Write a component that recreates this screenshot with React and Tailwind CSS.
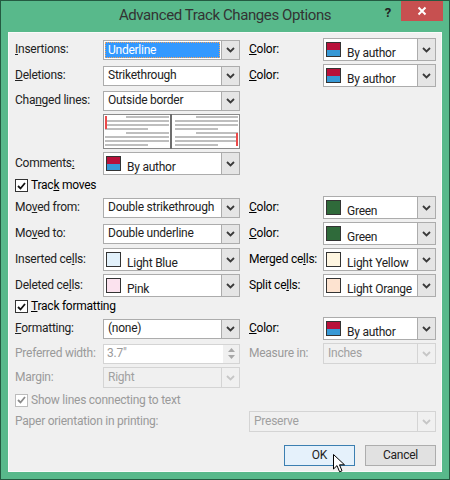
import React from 'react';

const FONT = { fontFamily: 'Roboto, Lato, "Open Sans", sans-serif' };

const Chevron = ({ disabled }) => (
  <svg width="9" height="6" viewBox="0 0 9 6">
    <path d="M1 1 L4.5 4.5 L8 1" fill="none" stroke={disabled ? '#c6c6c6' : '#3a3a3a'} strokeWidth="1.8" />
  </svg>
);

const ArrowBox = ({ disabled }) => (
  <div className={`w-[18px] h-full flex items-center justify-center border-l ${disabled ? 'border-[#d4d4d4] bg-[#f0f0f0]' : 'border-[#acacac] bg-[#e5e5e5]'}`}>
    <Chevron disabled={disabled} />
  </div>
);

const TextDrop = ({ value, w = 'w-[137px]', selected, disabled, h = 'h-[20px]' }) => (
  <div className={`${w} ${h} flex border ${disabled ? 'border-[#d4d4d4] bg-[#f0f0f0]' : 'border-[#acacac] bg-white'}`}>
    <div className="flex-1 flex items-center px-[1px] overflow-hidden whitespace-nowrap">
      {selected ? (
        <div className="w-full h-[16px] bg-[#3399ff] border border-dotted border-[#f5a35b] text-white pl-[2px] leading-[14px]">
          {value}
        </div>
      ) : (
        <span className={`pl-[3px] ${disabled ? 'text-[#a0a0a0]' : 'text-[#222]'}`}>{value}</span>
      )}
    </div>
    <ArrowBox disabled={disabled} />
  </div>
);

const AuthorSwatch = () => (
  <div className="w-[15px] h-[15px] border border-[#333] flex flex-col">
    <div className="flex-1 bg-[#b8113a]" />
    <div className="flex-1 bg-[#3799d6]" />
  </div>
);

const ColorDrop = ({ color, label, w = 'w-[113px]' }) => (
  <div className={`${w} h-[23px] flex border border-[#acacac] bg-white`}>
    <div className="flex-1 flex pl-[2px] pt-[3px] whitespace-nowrap overflow-hidden">
      {color === 'author' ? (
        <AuthorSwatch />
      ) : (
        <div className="w-[15px] h-[15px] border border-[#333]" style={{ background: color }} />
      )}
      <span className="ml-[6px] mt-[3px] text-[#222] leading-[16px]">{label}</span>
    </div>
    <ArrowBox />
  </div>
);

const Check = ({ disabled }) => (
  <div className={`w-[13px] h-[13px] border ${disabled ? 'border-[#bcbcbc]' : 'border-[#333]'} bg-white flex items-center justify-center`}>
    <svg width="9" height="8" viewBox="0 0 9 8">
      <path d="M1 4 L3.5 6.5 L8 1" fill="none" stroke={disabled ? '#8a8a8a' : '#111'} strokeWidth="1.8" />
    </svg>
  </div>
);

const Label = ({ children, disabled, w = 'w-[88px]' }) => (
  <div className={`${w} shrink-0 ${disabled ? 'text-[#9a9a9a]' : 'text-[#222]'}`}>{children}</div>
);

const Preview = () => {
  const lines = (x0, x1) =>
    [3, 7, 11, 15, 19, 23, 27, 31].map((y, i) => {
      const k = i % 4;
      let a = x0;
      let b = x1;
      if (k === 0) a = x0 + 21;
      if (k === 3) b = x0 + 43;
      return <line key={`${x0}-${i}`} x1={a} y1={y} x2={b} y2={y} stroke="#a9a9a9" strokeWidth="1.6" />;
    });
  return (
    <svg width="137" height="35" viewBox="0 0 137 35">
      <rect x="0.5" y="0.5" width="136" height="34" fill="#fff" stroke="#8a8a8a" />
      {lines(2, 66)}
      {lines(72, 135)}
      <rect x="67" y="0" width="2" height="35" fill="#6e6e6e" />
      <rect x="2" y="2" width="2" height="13" fill="#ec4a4a" />
      <rect x="133" y="19" width="2" height="13" fill="#ec4a4a" />
    </svg>
  );
};

export default function App() {
  return (
    <div className="w-[450px] h-[480px] bg-[#58b98b] border border-[#245a41] text-[12px] leading-[15px] tracking-[-0.25px]" style={FONT}>
      <div className="h-[31px] grid grid-cols-[1fr_auto_1fr]">
        <div />
        <div className="pt-[5px] text-[15px] text-[#333] leading-[18px] tracking-[-0.4px]">Advanced Track Changes Options</div>
        <div className="flex justify-end items-start pr-[6px]">
          <span className="mt-[4px] mr-[10px] text-[13px] font-bold text-[#222]">?</span>
          <div className="w-[42px] h-[20px] bg-[#c75050] flex items-center justify-center">
            <svg width="10" height="10" viewBox="0 0 10 10">
              <path d="M1.5 1.5 L8.5 8.5 M8.5 1.5 L1.5 8.5" stroke="#fff" strokeWidth="2" />
            </svg>
          </div>
        </div>
      </div>

      <div className="ml-[7px] w-[434px] h-[440px] bg-[#f0f0f0] border border-[#fafafa] pl-[6px] pt-[5px] flex flex-col">
        <div className="flex items-center h-[23px]">
          <Label><u>I</u>nsertions:</Label>
          <TextDrop value="Underline" selected />
          <div className="ml-[9px] w-[74px]"><u>C</u>olor:</div>
          <ColorDrop color="author" label="By author" />
        </div>
        <div className="flex items-center h-[23px] mt-[3px]">
          <Label><u>D</u>eletions:</Label>
          <TextDrop value="Strikethrough" />
          <div className="ml-[9px] w-[74px]"><u>C</u>olor:</div>
          <ColorDrop color="author" label="By author" />
        </div>
        <div className="flex items-center h-[21px] mt-[3px]">
          <Label>Cha<u>n</u>ged lines:</Label>
          <TextDrop value="Outside border" />
        </div>
        <div className="flex h-[35px] mt-[3px]">
          <div className="w-[88px]" />
          <Preview />
        </div>
        <div className="flex items-center h-[23px] mt-[3px]">
          <Label>Comments<u>:</u></Label>
          <ColorDrop color="author" label="By author" w="w-[137px]" />
        </div>
        <div className="flex items-center h-[15px] mt-[3px]">
          <Check />
          <span className="ml-[3px]">Trac<u>k</u> moves</span>
        </div>
        <div className="flex items-center h-[23px] mt-[3px]">
          <Label>Mo<u>v</u>ed from:</Label>
          <TextDrop value="Double strikethrough" />
          <div className="ml-[9px] w-[74px]"><u>C</u>olor:</div>
          <ColorDrop color="#2f6a3a" label="Green" />
        </div>
        <div className="flex items-center h-[23px] mt-[3px]">
          <Label>Mo<u>v</u>ed to:</Label>
          <TextDrop value="Double underline" />
          <div className="ml-[9px] w-[74px]"><u>C</u>olor:</div>
          <ColorDrop color="#2f6a3a" label="Green" />
        </div>
        <div className="flex items-center h-[23px] mt-[3px]">
          <Label>Inserted ce<u>l</u>ls:</Label>
          <ColorDrop color="#e2f1fb" label="Light Blue" w="w-[137px]" />
          <div className="ml-[9px] w-[74px]">Merged ce<u>l</u>ls:</div>
          <ColorDrop color="#fff6e1" label="Light Yellow" />
        </div>
        <div className="flex items-center h-[23px] mt-[3px]">
          <Label>Deleted ce<u>l</u>ls:</Label>
          <ColorDrop color="#fbe2ee" label="Pink" w="w-[137px]" />
          <div className="ml-[9px] w-[74px]">Split ce<u>l</u>ls:</div>
          <ColorDrop color="#fde3d0" label="Light Orange" />
        </div>
        <div className="flex items-center h-[15px] mt-[2px]">
          <Check />
          <span className="ml-[3px]"><u>T</u>rack formatting</span>
        </div>
        <div className="flex items-center h-[23px] mt-[3px]">
          <Label><u>F</u>ormatting:</Label>
          <TextDrop value="(none)" />
          <div className="ml-[9px] w-[74px]"><u>C</u>olor:</div>
          <ColorDrop color="author" label="By author" />
        </div>
        <div className="flex items-center h-[21px] mt-[3px]">
          <Label disabled>Preferred width:</Label>
          <div className="w-[137px] h-[20px] flex border border-[#d4d4d4] bg-white">
            <span className="flex-1 pl-[3px] flex items-center text-[#9a9a9a]">3.7"</span>
            <div className="w-[16px] flex flex-col items-center justify-center gap-[3px] bg-[#f0f0f0]">
              <svg width="7" height="4" viewBox="0 0 7 4"><path d="M0 4 L3.5 0 L7 4 Z" fill="#a8a8a8" /></svg>
              <svg width="7" height="4" viewBox="0 0 7 4"><path d="M0 0 L3.5 4 L7 0 Z" fill="#a8a8a8" /></svg>
            </div>
          </div>
          <div className="ml-[9px] w-[74px] text-[#9a9a9a]">Measure in:</div>
          <TextDrop value="Inches" w="w-[113px]" h="h-[21px]" disabled />
        </div>
        <div className="flex items-center h-[21px] mt-[3px]">
          <Label disabled>Margin:</Label>
          <TextDrop value="Right" h="h-[21px]" disabled />
        </div>
        <div className="flex items-center h-[14px] mt-[5px]">
          <Check disabled />
          <span className="ml-[3px] text-[#9a9a9a]">Show lines connecting to text</span>
        </div>
        <div className="flex items-center h-[21px] mt-[4px]">
          <Label disabled w="w-[234px]">Paper orientation in printing:</Label>
          <TextDrop value="Preserve" w="w-[187px]" h="h-[21px]" disabled />
        </div>
        <div className="flex justify-end gap-[10px] mt-[13px] pr-[5px]">
          <div className="relative w-[71px] h-[21px] border border-[#3c7fb1] bg-[#e5f1fb] flex items-center justify-center text-[#222]">
            OK
            <svg className="absolute left-[48px] top-[8px]" width="13" height="19" viewBox="0 0 13 19">
              <path d="M0.5 0.5 L0.5 15 L4 11.6 L6.6 17.8 L9 16.8 L6.5 10.8 L11.5 10.8 Z" fill="#fff" stroke="#000" strokeWidth="1" strokeLinejoin="round" />
            </svg>
          </div>
          <div className="w-[71px] h-[21px] border border-[#adadad] bg-[#e1e1e1] flex items-center justify-center text-[#222]">
            Cancel
          </div>
        </div>
      </div>
    </div>
  );
}
